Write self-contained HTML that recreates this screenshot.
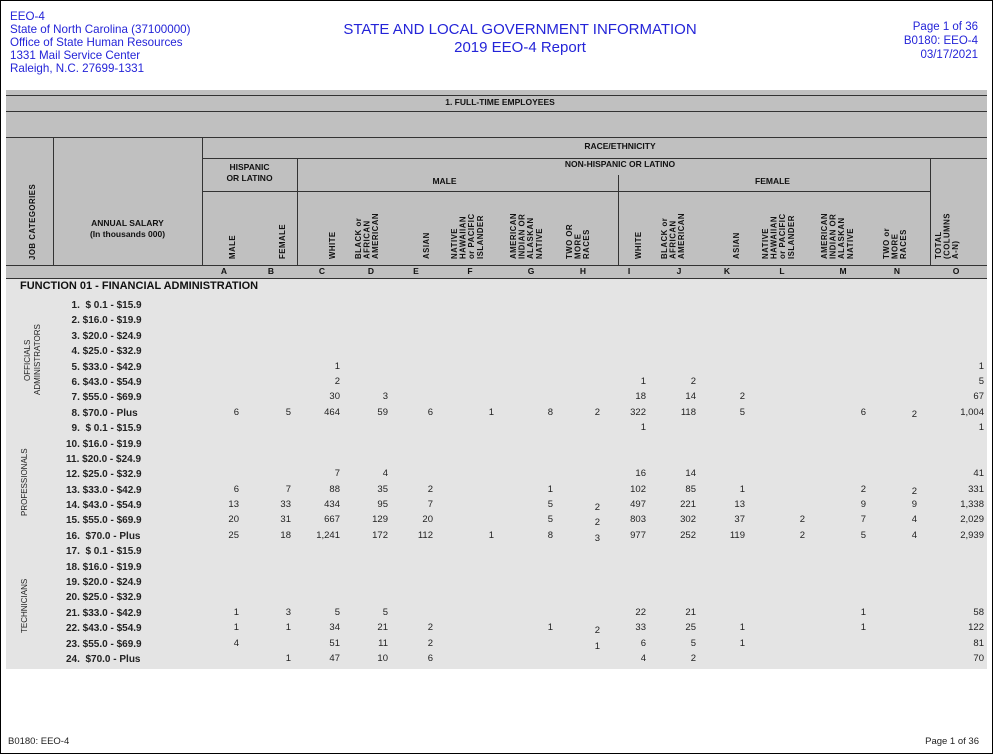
<!DOCTYPE html>
<html><head><meta charset="utf-8">
<style>
*{margin:0;padding:0;box-sizing:border-box}
body{width:993px;height:754px;background:#fff;position:relative;overflow:hidden;font-family:"Liberation Sans",Arial,sans-serif}
#frame{position:absolute;left:0;top:0;width:993px;height:754px;border:1px solid #000}
.a{position:absolute;white-space:pre}
.blue{color:#2424d8}
.hl{position:absolute;background:#333;height:1px}
.vl{position:absolute;background:#333;width:1px}
.hb{font-weight:bold;font-size:8.5px;color:#111;text-align:center}
.rot{position:absolute;writing-mode:vertical-rl;transform:rotate(180deg);font-weight:bold;font-size:7.8px;line-height:8.6px;color:#111;text-align:left;height:70px;top:189px;letter-spacing:0.5px}
.lt{position:absolute;top:266px;width:20px;margin-left:-10px;text-align:center;font-weight:bold;font-size:8.5px;color:#111}
.r{position:absolute;left:0;width:993px;height:12px;font-size:9.5px;line-height:12px;color:#222}
.r span{position:absolute;width:50px;text-align:right}
.lab{position:absolute;font-weight:bold;font-size:10px;line-height:12px;color:#222;white-space:pre}
.side{position:absolute;writing-mode:vertical-rl;transform:rotate(180deg);font-size:8px;line-height:10px;color:#222;text-align:center}
</style></head><body>
<div id="frame"></div>
<div class="a blue" style="left:10px;top:10px;font-size:11.6px;line-height:13px">EEO-4
State of North Carolina (37100000)
Office of State Human Resources
1331 Mail Service Center
Raleigh, N.C. 27699-1331</div>
<div class="a blue" style="left:270px;top:21px;width:500px;text-align:center;font-size:15px;line-height:18px">STATE AND LOCAL GOVERNMENT INFORMATION
2019 EEO-4 Report</div>
<div class="a blue" style="left:780px;top:20px;width:198px;text-align:right;font-size:11.5px;line-height:14px">Page 1 of 36
B0180: EEO-4
03/17/2021</div>

<div style="position:absolute;left:6px;top:90px;width:981px;height:188px;background:#c0c0c0"></div>
<div style="position:absolute;left:6px;top:278px;width:981px;height:391px;background:#e4e4e4"></div>

<div class="hl" style="left:6px;top:95px;width:981px"></div>
<div class="hl" style="left:6px;top:111px;width:981px"></div>
<div class="hl" style="left:6px;top:137px;width:981px"></div>
<div class="hl" style="left:202px;top:158px;width:785px"></div>
<div class="hl" style="left:202px;top:191px;width:728px"></div>
<div class="hl" style="left:6px;top:265px;width:981px"></div>
<div class="hl" style="left:6px;top:278px;width:981px"></div>
<div class="vl" style="left:53px;top:137px;height:128px"></div>
<div class="vl" style="left:202px;top:137px;height:128px"></div>
<div class="vl" style="left:297px;top:158px;height:107px"></div>
<div class="vl" style="left:618px;top:175px;height:90px"></div>
<div class="vl" style="left:930px;top:158px;height:107px"></div>

<div class="a hb" style="left:380px;top:97px;width:240px">1. FULL-TIME EMPLOYEES</div>
<div class="a hb" style="left:500px;top:141px;width:240px">RACE/ETHNICITY</div>
<div class="a hb" style="left:500px;top:159px;width:240px">NON-HISPANIC OR LATINO</div>
<div class="a hb" style="left:202px;top:162px;width:95px;line-height:11px">HISPANIC
OR LATINO</div>
<div class="a hb" style="left:397px;top:176px;width:95px">MALE</div>
<div class="a hb" style="left:725px;top:176px;width:95px">FEMALE</div>
<div class="a hb" style="left:53px;top:218px;width:149px;line-height:11px">ANNUAL SALARY
(In thousands 000)</div>

<div class="rot" style="left:29px;top:180px;height:80px">JOB CATEGORIES</div>
<div class="rot" style="left:229px">MALE</div>
<div class="rot" style="left:279px">FEMALE</div>
<div class="rot" style="left:329px">WHITE</div>
<div class="rot" style="left:355px">BLACK or<br>AFRICAN<br>AMERICAN</div>
<div class="rot" style="left:423px">ASIAN</div>
<div class="rot" style="left:451px">NATIVE<br>HAWAIIAN<br>or PACIFIC<br>ISLANDER</div>
<div class="rot" style="left:510px">AMERICAN<br>INDIAN OR<br>ALASKAN<br>NATIVE</div>
<div class="rot" style="left:566px">TWO OR<br>MORE<br>RACES</div>
<div class="rot" style="left:635px">WHITE</div>
<div class="rot" style="left:661px">BLACK or<br>AFRICAN<br>AMERICAN</div>
<div class="rot" style="left:733px">ASIAN</div>
<div class="rot" style="left:762px">NATIVE<br>HAWAIIAN<br>or PACIFIC<br>ISLANDER</div>
<div class="rot" style="left:821px">AMERICAN<br>INDIAN OR<br>ALASKAN<br>NATIVE</div>
<div class="rot" style="left:883px">TWO or<br>MORE<br>RACES</div>
<div class="rot" style="left:935px">TOTAL<br>(COLUMNS<br>A-N)</div>

<div class="lt" style="left:224px">A</div><div class="lt" style="left:271px">B</div><div class="lt" style="left:322px">C</div><div class="lt" style="left:371px">D</div><div class="lt" style="left:416px">E</div><div class="lt" style="left:470px">F</div><div class="lt" style="left:531px">G</div><div class="lt" style="left:583px">H</div><div class="lt" style="left:629px">I</div><div class="lt" style="left:679px">J</div><div class="lt" style="left:727px">K</div><div class="lt" style="left:782px">L</div><div class="lt" style="left:843px">M</div><div class="lt" style="left:897px">N</div><div class="lt" style="left:956px">O</div>

<div class="a" style="left:20px;top:279px;font-weight:bold;font-size:11px;line-height:14px;color:#111">FUNCTION 01 - FINANCIAL ADMINISTRATION</div>

<div class="side" style="left:23px;top:320px;width:22px;height:80px">OFFICIALS<br>ADMINISTRATORS</div>
<div class="side" style="left:20px;top:445px;width:12px;height:75px">PROFESSIONALS</div>
<div class="side" style="left:20px;top:575px;width:12px;height:62px">TECHNICIANS</div>

<div class="lab" style="left:66px;top:300px">  1.  $ 0.1 - $15.9</div>
<div class="lab" style="left:66px;top:315px">  2. $16.0 - $19.9</div>
<div class="lab" style="left:66px;top:331px">  3. $20.0 - $24.9</div>
<div class="lab" style="left:66px;top:346px">  4. $25.0 - $32.9</div>
<div class="lab" style="left:66px;top:362px">  5. $33.0 - $42.9</div>
<div class="lab" style="left:66px;top:377px">  6. $43.0 - $54.9</div>
<div class="lab" style="left:66px;top:392px">  7. $55.0 - $69.9</div>
<div class="lab" style="left:66px;top:408px">  8. $70.0 - Plus</div>
<div class="lab" style="left:66px;top:423px">  9.  $ 0.1 - $15.9</div>
<div class="lab" style="left:66px;top:439px">10. $16.0 - $19.9</div>
<div class="lab" style="left:66px;top:454px">11. $20.0 - $24.9</div>
<div class="lab" style="left:66px;top:469px">12. $25.0 - $32.9</div>
<div class="lab" style="left:66px;top:485px">13. $33.0 - $42.9</div>
<div class="lab" style="left:66px;top:500px">14. $43.0 - $54.9</div>
<div class="lab" style="left:66px;top:515px">15. $55.0 - $69.9</div>
<div class="lab" style="left:66px;top:531px">16.  $70.0 - Plus</div>
<div class="lab" style="left:66px;top:546px">17.  $ 0.1 - $15.9</div>
<div class="lab" style="left:66px;top:562px">18. $16.0 - $19.9</div>
<div class="lab" style="left:66px;top:577px">19. $20.0 - $24.9</div>
<div class="lab" style="left:66px;top:592px">20. $25.0 - $32.9</div>
<div class="lab" style="left:66px;top:608px">21. $33.0 - $42.9</div>
<div class="lab" style="left:66px;top:623px">22. $43.0 - $54.9</div>
<div class="lab" style="left:66px;top:639px">23. $55.0 - $69.9</div>
<div class="lab" style="left:66px;top:654px">24.  $70.0 - Plus</div>

<div class="r" style="top:361px"><span style="left:290px">1</span><span style="left:934px">1</span></div>
<div class="r" style="top:376px"><span style="left:290px">2</span><span style="left:596px">1</span><span style="left:646px">2</span><span style="left:934px">5</span></div>
<div class="r" style="top:391px"><span style="left:290px">30</span><span style="left:338px">3</span><span style="left:596px">18</span><span style="left:646px">14</span><span style="left:695px">2</span><span style="left:934px">67</span></div>
<div class="r" style="top:407px"><span style="left:189px">6</span><span style="left:241px">5</span><span style="left:290px">464</span><span style="left:338px">59</span><span style="left:383px">6</span><span style="left:444px">1</span><span style="left:503px">8</span><span style="left:550px">2</span><span style="left:596px">322</span><span style="left:646px">118</span><span style="left:695px">5</span><span style="left:816px">6</span><span style="left:867px;top:2px">2</span><span style="left:934px">1,004</span></div>
<div class="r" style="top:422px"><span style="left:596px">1</span><span style="left:934px">1</span></div>
<div class="r" style="top:468px"><span style="left:290px">7</span><span style="left:338px">4</span><span style="left:596px">16</span><span style="left:646px">14</span><span style="left:934px">41</span></div>
<div class="r" style="top:484px"><span style="left:189px">6</span><span style="left:241px">7</span><span style="left:290px">88</span><span style="left:338px">35</span><span style="left:383px">2</span><span style="left:503px">1</span><span style="left:596px">102</span><span style="left:646px">85</span><span style="left:695px">1</span><span style="left:816px">2</span><span style="left:867px;top:2px">2</span><span style="left:934px">331</span></div>
<div class="r" style="top:499px"><span style="left:189px">13</span><span style="left:241px">33</span><span style="left:290px">434</span><span style="left:338px">95</span><span style="left:383px">7</span><span style="left:503px">5</span><span style="left:550px;top:3px">2</span><span style="left:596px">497</span><span style="left:646px">221</span><span style="left:695px">13</span><span style="left:816px">9</span><span style="left:867px">9</span><span style="left:934px">1,338</span></div>
<div class="r" style="top:514px"><span style="left:189px">20</span><span style="left:241px">31</span><span style="left:290px">667</span><span style="left:338px">129</span><span style="left:383px">20</span><span style="left:503px">5</span><span style="left:550px;top:3px">2</span><span style="left:596px">803</span><span style="left:646px">302</span><span style="left:695px">37</span><span style="left:755px">2</span><span style="left:816px">7</span><span style="left:867px">4</span><span style="left:934px">2,029</span></div>
<div class="r" style="top:530px"><span style="left:189px">25</span><span style="left:241px">18</span><span style="left:290px">1,241</span><span style="left:338px">172</span><span style="left:383px">112</span><span style="left:444px">1</span><span style="left:503px">8</span><span style="left:550px;top:3px">3</span><span style="left:596px">977</span><span style="left:646px">252</span><span style="left:695px">119</span><span style="left:755px">2</span><span style="left:816px">5</span><span style="left:867px">4</span><span style="left:934px">2,939</span></div>
<div class="r" style="top:607px"><span style="left:189px">1</span><span style="left:241px">3</span><span style="left:290px">5</span><span style="left:338px">5</span><span style="left:596px">22</span><span style="left:646px">21</span><span style="left:816px">1</span><span style="left:934px">58</span></div>
<div class="r" style="top:622px"><span style="left:189px">1</span><span style="left:241px">1</span><span style="left:290px">34</span><span style="left:338px">21</span><span style="left:383px">2</span><span style="left:503px">1</span><span style="left:550px;top:3px">2</span><span style="left:596px">33</span><span style="left:646px">25</span><span style="left:695px">1</span><span style="left:816px">1</span><span style="left:934px">122</span></div>
<div class="r" style="top:638px"><span style="left:189px">4</span><span style="left:290px">51</span><span style="left:338px">11</span><span style="left:383px">2</span><span style="left:550px;top:3px">1</span><span style="left:596px">6</span><span style="left:646px">5</span><span style="left:695px">1</span><span style="left:934px">81</span></div>
<div class="r" style="top:653px"><span style="left:241px">1</span><span style="left:290px">47</span><span style="left:338px">10</span><span style="left:383px">6</span><span style="left:596px">4</span><span style="left:646px">2</span><span style="left:934px">70</span></div>

<div class="a" style="left:8px;top:736px;font-size:9.5px;color:#222">B0180: EEO-4</div>
<div class="a" style="left:880px;top:736px;width:99px;text-align:right;font-size:9.5px;color:#222">Page 1 of 36</div>
</body></html>
